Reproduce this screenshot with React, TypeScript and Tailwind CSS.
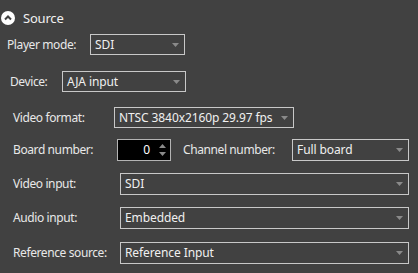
import React from 'react';

const font = { fontFamily: '"Noto Sans", "Open Sans", sans-serif' };

// Small grey triangle used by all the combo boxes
const Caret = () => (
  <svg width="7" height="4" viewBox="0 0 7 4" className="shrink-0">
    <path d="M0 0 H7 L3.5 4 Z" fill="#8a8a8a" />
  </svg>
);

type ComboProps = { value: string; className: string };

const Combo = ({ value, className }: ComboProps) => (
  <div
    className={`flex items-center justify-between border border-[#c8c8c8] pl-[4px] pr-[5px] text-[12px] tracking-[-0.1px] text-[#f0f0f0] ${className}`}
  >
    <span className="whitespace-nowrap leading-none">{value}</span>
    <Caret />
  </div>
);

const Spin = () => (
  <div className="flex h-[22px] w-[54px] items-center justify-end border border-[#b4b4b4] bg-black pr-[4px] text-[12px] text-white">
    <span className="mr-[9px] leading-none">0</span>
    <svg width="7" height="12" viewBox="0 0 7 12">
      <path d="M0 4 L3.5 0 L7 4 Z" fill="#8a8a8a" />
      <path d="M0 8 L3.5 12 L7 8 Z" fill="#8a8a8a" />
    </svg>
  </div>
);

const Label = ({ text, className }: { text: string; className: string }) => (
  <span className={`shrink-0 whitespace-nowrap text-[12px] leading-none tracking-[-0.4px] text-[#e8e8e8] ${className}`}>
    {text}
  </span>
);

export default function App() {
  return (
    <div className="h-[273px] w-[418px] overflow-hidden bg-[#414141]" style={font}>
      {/* Section header */}
      <div className="mt-[11px] flex h-[14px] items-center pl-[1px]">
        <div className="flex h-[14px] w-[14px] items-center justify-center rounded-full bg-white">
          <svg width="8" height="6" viewBox="0 0 8 6">
            <path d="M1 4.5 L4 1.5 L7 4.5" stroke="#414141" strokeWidth="2" fill="none" />
          </svg>
        </div>
        <span className="ml-[8px] text-[13px] leading-none tracking-[-0.2px] text-[#f0f0f0]">Source</span>
      </div>

      <div className="mt-[9px] flex items-center pl-[7px]">
        <Label text="Player mode:" className="w-[83px]" />
        <Combo value="SDI" className="h-[21px] w-[95px]" />
      </div>

      <div className="mt-[16px] flex items-center pl-[10px]">
        <Label text="Device:" className="w-[52px]" />
        <Combo value="AJA input" className="h-[21px] w-[124px]" />
      </div>

      <div className="mt-[15px] flex items-center pl-[13px]">
        <Label text="Video format:" className="w-[101px]" />
        <Combo value="NTSC 3840x2160p 29.97 fps" className="h-[21px] w-[180px]" />
      </div>

      <div className="mt-[11px] flex items-center pl-[13px]">
        <Label text="Board number:" className="w-[104px]" />
        <Spin />
        <Label text="Channel number:" className="ml-[12px] w-[109px]" />
        <Combo value="Full board" className="h-[22px] w-[117px]" />
      </div>

      <div className="mt-[12px] flex items-center pl-[13px]">
        <Label text="Video input:" className="w-[107px]" />
        <Combo value="SDI" className="h-[22px] w-[289px]" />
      </div>

      <div className="mt-[12px] flex items-center pl-[13px]">
        <Label text="Audio input:" className="w-[107px]" />
        <Combo value="Embedded" className="h-[22px] w-[289px]" />
      </div>

      <div className="mt-[13px] flex items-center pl-[13px]">
        <Label text="Reference source:" className="w-[107px]" />
        <Combo value="Reference Input" className="h-[22px] w-[289px]" />
      </div>
    </div>
  );
}
